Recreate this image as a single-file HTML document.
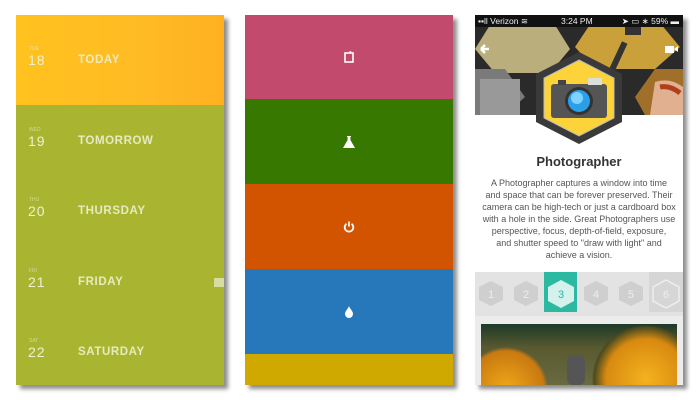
<!DOCTYPE html>
<html><head><meta charset="utf-8">
<style>
*{margin:0;padding:0;box-sizing:border-box}
body{width:700px;height:400px;background:#fff;position:relative;overflow:hidden;font-family:"Liberation Sans",sans-serif}
.p{position:absolute;top:15px;height:370px;width:208px;box-shadow:4px 4px 4px rgba(0,0,0,0.45)}
#p1{left:16px;background:#a9b530}
#p2{left:245px}
#p3{left:475px;width:208px;background:#fff}
.row{position:absolute;left:0;width:208px;color:#eef0d0}
.row .dn{position:absolute;left:13px;top:0;font-size:5px;opacity:.6}
.row .d{position:absolute;left:12px;top:6px;font-size:14px;letter-spacing:1px}
.row .t{position:absolute;left:62px;top:8px;font-size:11.5px;letter-spacing:.6px;font-weight:bold;opacity:.9}
.band{position:absolute;left:0;width:208px}
.ic{position:absolute;left:50%;top:50%;transform:translate(-50%,-50%)}
</style></head><body>
<div class="p" id="p1">
 <div style="position:absolute;left:0;top:0;width:208px;height:90px;background:linear-gradient(90deg,#ffc21e 0,#ffbb24 60%,#ffb022 100%)"></div>
 <div class="row" style="top:31px"><div class="dn">TUE</div><div class="d">18</div><div class="t">TODAY</div></div>
 <div class="row" style="top:112px"><div class="dn">WED</div><div class="d">19</div><div class="t">TOMORROW</div></div>
 <div class="row" style="top:182px"><div class="dn">THU</div><div class="d">20</div><div class="t">THURSDAY</div></div>
 <div class="row" style="top:253px"><div class="dn">FRI</div><div class="d">21</div><div class="t">FRIDAY</div></div>
 <div class="row" style="top:323px"><div class="dn">SAT</div><div class="d">22</div><div class="t">SATURDAY</div></div>
 <div style="position:absolute;left:198px;top:263px;width:10px;height:9px;background:#d8dca0"></div>
</div>
<div class="p" id="p2">
 <div class="band" style="top:0;height:84px;background:#c24a6c"><svg class="ic" width="10" height="12" viewBox="0 0 10 12"><rect x="1" y="2" width="8" height="9" fill="none" stroke="#fff" stroke-width="1.6"/><path d="M5 2 L7 0" stroke="#fff" stroke-width="1.2"/></svg></div>
 <div class="band" style="top:84px;height:85px;background:#367800"><svg class="ic" width="12" height="12" viewBox="0 0 12 12"><path d="M4 0h4v1h-0.6v3L12 12H0L4.6 4V1H4z" fill="#fff"/></svg></div>
 <div class="band" style="top:169px;height:85px;background:#d35400"><svg class="ic" width="12" height="12" viewBox="0 0 12 12"><path d="M3.5 2.8A4.3 4.3 0 1 0 8.5 2.8" fill="none" stroke="#fff" stroke-width="1.8"/><path d="M6 0.5v5" stroke="#fff" stroke-width="1.8"/></svg></div>
 <div class="band" style="top:254px;height:85px;background:#2778bb"><svg class="ic" width="10" height="12" viewBox="0 0 10 12"><path d="M5 0C4 3 1 5 1 8a4 4 0 0 0 8 0C9 5 6 3 5 0z" fill="#fff"/></svg></div>
 <div class="band" style="top:339px;height:31px;background:#cfa900"></div>
</div>
<div class="p" id="p3">
 <div style="position:absolute;left:0;top:0;width:208px;height:12px;background:#111;color:#eee;font-size:8.5px;line-height:12px">
  <span style="position:absolute;left:3px">▪▪ll Verizon ≋</span>
  <span style="position:absolute;left:86px">3:24 PM</span>
  <span style="position:absolute;right:4px">➤ ▭ ∗ 59% ▬</span>
 </div>
 <svg style="position:absolute;left:0;top:12px" width="208" height="88" viewBox="0 0 208 88">
  <rect width="208" height="88" fill="#2a2a2a"/>
  <polygon points="20,-10 75,-10 95,22 75,46 20,46 0,22" fill="#b9ae7c"/>
  <polygon points="120,-10 180,-10 205,20 180,42 120,42 100,20" fill="#c9a03a"/>
  <polygon points="-20,42 30,42 50,70 30,88 -20,88" fill="#7a7a7a"/>
  <polygon points="180,42 215,42 215,88 170,88 160,70" fill="#a0702a"/>
  <rect x="5" y="52" width="40" height="36" fill="#999"/>
  <path d="M180 55 Q195 50 208 60 L208 88 L175 88 Z" fill="#e0b090"/>
  <path d="M185 60 Q195 58 205 66" stroke="#b0401a" stroke-width="5" fill="none"/>
  <rect x="140" y="14" width="6" height="30" fill="#333" transform="rotate(25 143 30)"/>
  <rect x="150" y="0" width="16" height="8" fill="#333"/>
  <path d="M14 22h-8M6 22l4-4M6 22l4 4" stroke="#fff" stroke-width="2.5" fill="none"/>
  <rect x="190" y="19" width="9" height="7" fill="#fff"/><path d="M199 22l4-3v6z" fill="#fff"/>
 </svg>
 <svg style="position:absolute;left:61px;top:37px" width="86" height="92" viewBox="0 0 86 92">
  <polygon points="43,0 86,22 86,70 43,92 0,70 0,22" fill="#3a3a3a"/>
  <polygon points="43,8 78,26 78,66 43,84 8,66 8,26" fill="#fdd33a" stroke="#bbb" stroke-width="1"/>
  <rect x="15" y="32" width="56" height="34" rx="3" fill="#555"/>
  <rect x="52" y="26" width="14" height="7" fill="#ddd"/>
  <rect x="22" y="28" width="8" height="5" fill="#444"/>
  <circle cx="43" cy="49" r="14" fill="#333"/>
  <circle cx="43" cy="49" r="11" fill="#2aa0e8"/>
  <circle cx="41" cy="46" r="6" fill="#7fd2ff"/>
 </svg>
 <div style="position:absolute;left:0;top:139px;width:208px;text-align:center;font-size:13px;font-weight:bold;color:#333">Photographer</div>
 <div style="position:absolute;left:0;top:162px;width:208px;text-align:center;font-size:9px;line-height:12px;color:#555;white-space:nowrap">A Photographer captures a window into time<br>and space that can be forever preserved. Their<br>camera can be high-tech or just a cardboard box<br>with a hole in the side. Great Photographers use<br>perspective, focus, depth-of-field, exposure,<br>and shutter speed to "draw with light" and<br>achieve a vision.</div>
 <div style="position:absolute;left:0;top:257px;width:208px;height:113px;background:#ececec"></div>
 <div style="position:absolute;left:0;top:257px;width:208px;height:44px;background:#e3e3e3"></div>
 <div style="position:absolute;left:69px;top:257px;width:33px;height:40px;background:#2bb9a2"></div>
 <div style="position:absolute;left:174px;top:257px;width:34px;height:40px;background:#d6d6d6"></div>
 <svg style="position:absolute;left:0;top:257px" width="208" height="44" viewBox="0 0 208 44">
  <g font-family="Liberation Sans" font-size="11" text-anchor="middle">
   <polygon points="16,9 28,15 28,28 16,34 4,28 4,15" fill="#cfcfcf"/><text x="16" y="26" fill="#eee">1</text>
   <polygon points="51,9 63,15 63,28 51,34 39,28 39,15" fill="#cfcfcf"/><text x="51" y="26" fill="#eee">2</text>
   <polygon points="86,8 99,15 99,29 86,36 73,29 73,15" fill="#fff" opacity=".8"/><text x="86" y="26" fill="#2bb9a2">3</text>
   <polygon points="121,9 133,15 133,28 121,34 109,28 109,15" fill="#cfcfcf"/><text x="121" y="26" fill="#eee">4</text>
   <polygon points="156,9 168,15 168,28 156,34 144,28 144,15" fill="#cfcfcf"/><text x="156" y="26" fill="#eee">5</text>
   <polygon points="191,8 204,15 204,29 191,36 178,29 178,15" fill="none" stroke="#eee" stroke-width="1.5"/><text x="191" y="26" fill="#eee">6</text>
  </g>
 </svg>
 <div style="position:absolute;left:6px;top:309px;width:196px;height:61px;background:radial-gradient(circle at 165px 55px,#f5b21e 0,#d88a10 40px,#4a4a20 52px,transparent 54px),radial-gradient(circle at 25px 65px,#f0a818 0,#c87a10 38px,transparent 42px),linear-gradient(180deg,#1e3a28 0,#5a5a30 40%,#6a6a40 100%)"></div>
 <div style="position:absolute;left:92px;top:340px;width:18px;height:30px;background:#555;border-radius:6px"></div>
</div>
</body></html>
